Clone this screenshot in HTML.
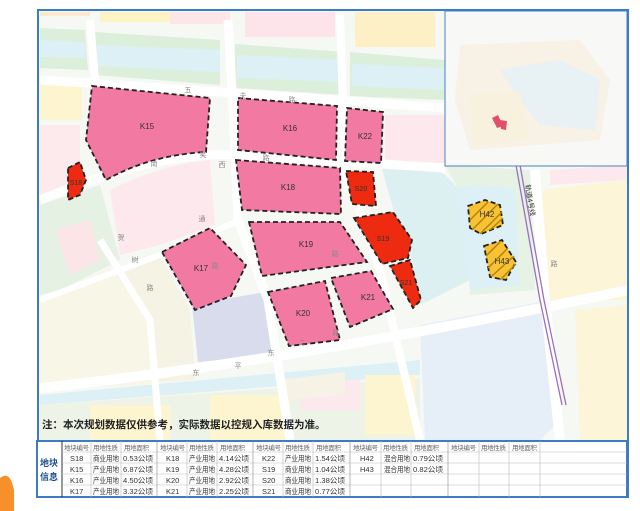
<!DOCTYPE html>
<html><head><meta charset="utf-8"><style>
html,body{margin:0;padding:0;background:#fff;width:640px;height:511px;overflow:hidden;font-family:"Liberation Sans","Noto Sans CJK SC",sans-serif}
svg{position:absolute;left:0;top:0}
</style></head><body>
<svg width="640" height="511" viewBox="0 0 640 511" font-family="Liberation Sans, Noto Sans CJK SC, sans-serif">
<rect width="640" height="511" fill="#fff"/>
<path d="M0,478 Q10,470 14,490 L14,511 L0,511Z" fill="#f7902a"/>
<rect x="38" y="10" width="590" height="430" fill="#f6f8f3"/>
<g>
<rect x="40" y="12" width="50" height="4" fill="#fde9cf"/>
<rect x="100" y="12" width="80" height="10" fill="#fdf3c4"/>
<rect x="170" y="12" width="60" height="12" fill="#fde6e8"/>
<rect x="245" y="12" width="90" height="25" fill="#fde4ea"/>
<rect x="355" y="12" width="80" height="35" fill="#fdf0c6"/>
<path d="M40,28 L85,30 L88,70 L40,68Z" fill="#dcefdb"/>
<path d="M40,40 L85,42 L85,58 L40,57Z" fill="#dcf0f5"/>
<path d="M95,32 L220,40 L220,85 L95,75Z" fill="#dcefdb"/>
<path d="M97,45 L220,50 L220,72 L97,66Z" fill="#dcf0f5"/>
<path d="M235,44 L345,52 L345,95 L235,88Z" fill="#dcefdb"/>
<path d="M237,55 L345,60 L345,82 L237,78Z" fill="#dcf0f5"/>
<path d="M350,52 L445,60 L445,100 L350,96Z" fill="#dcefdb"/>
<path d="M352,64 L445,68 L445,90 L352,86Z" fill="#dcf0f5"/>
<rect x="40" y="80" width="42" height="40" fill="#fdf5d0"/>
<rect x="40" y="125" width="40" height="70" fill="#fdeaec"/>
<path d="M385,115 L445,115 L445,165 L385,165Z" fill="#fde8ee"/>
<path d="M110,190 Q160,165 210,160 L215,225 L160,245 L120,255Z" fill="#fde9ed"/>
<path d="M40,205 L100,185 L120,260 L60,290 L40,295Z" fill="#e5f1e2"/>
<path d="M55,230 L90,220 L100,260 L70,275Z" fill="#fbe5e6"/>
<path d="M40,300 L110,268 L150,320 L155,385 L40,388Z" fill="#f8f6e6"/>
<path d="M112,270 L160,255 L190,310 L195,380 L158,382 L150,320Z" fill="#f5f3e3"/>
<path d="M192,305 L265,292 L272,355 L198,362Z" fill="#d9dced"/>
<path d="M380,160 Q420,160 445,175 L470,200 L470,280 L430,300 L418,305 L410,250 L395,215 L385,180Z" fill="#dcf0f1"/>
<path d="M445,165 L530,170 L535,290 L470,295 L470,210Z" fill="#e6f2e3"/>
<path d="M455,190 Q470,180 515,190 L520,285 L470,290Z" fill="#dcf0f5"/>
<path d="M540,190 L628,180 L628,300 L550,300Z" fill="#fdf5d8"/>
<path d="M550,170 L628,165 L628,180 L550,185Z" fill="#fde8ee"/>
<path d="M575,310 L628,305 L628,440 L580,440Z" fill="#fdf5d8"/>
<path d="M420,325 L550,300 L560,420 L540,440 L425,440Z" fill="#e6eef8"/>
<path d="M40,395 L420,360 L420,375 L40,405Z" fill="#dcf0f5"/>
<path d="M40,405 L420,378 L420,440 L40,440Z" fill="#edf4e7"/>
<rect x="90" y="405" width="80" height="35" fill="#fdf5d0"/>
<rect x="210" y="395" width="80" height="45" fill="#fdf5d0"/>
<rect x="300" y="380" width="60" height="30" fill="#fde8ee"/>
<rect x="365" y="375" width="50" height="60" fill="#fdf5d0"/>
<path d="M280,380 L345,372 L345,395 L285,400Z" fill="#f6f3e6"/>
<g stroke="#ffffff" fill="none">
<path d="M40,80 Q200,90 445,108" stroke-width="9"/>
<path d="M40,200 Q160,150 240,155 L445,168" stroke-width="9"/>
<path d="M40,388 Q300,360 628,290" stroke-width="10"/>
<path d="M228,20 L232,90 L238,220 L268,300 L290,440" stroke-width="9"/>
<path d="M340,15 L345,170 L380,270 L420,440" stroke-width="8"/>
<path d="M90,20 L95,80" stroke-width="8"/>
<path d="M535,170 L545,300 L560,440" stroke-width="10"/>
<path d="M100,240 L150,320 L160,440" stroke-width="7"/>
<path d="M40,300 L160,255 L240,220" stroke-width="6"/>
</g>
<path d="M516,165 L540,300 L562,405" stroke="#9a6fc0" stroke-width="1.3" fill="none"/>
<path d="M520,165 L544,300 L566,405" stroke="#9a6fc0" stroke-width="1.3" fill="none"/>
</g>
<g stroke="#222" stroke-width="1.8" stroke-dasharray="5,3" fill="#f27aa2">
<path d="M92,86 L210,98 L206,152 Q150,155 106,180 L86,140Z"/>
<path d="M238,98 L337,106 L336,160 L238,150Z"/>
<path d="M347,108 L383,112 L381,163 L345,161Z"/>
<path d="M236,160 L340,168 L341,214 L242,210Z"/>
<path d="M249,222 L340,222 L367,262 L262,276Z"/>
<path d="M162,252 L210,228 L246,265 L231,296 L195,310Z"/>
<path d="M268,292 L325,281 L340,340 L289,346Z"/>
<path d="M331,278 L371,271 L393,309 L350,327Z"/>
</g>
<g stroke="#222" stroke-width="1.8" stroke-dasharray="5,3" fill="#ee2b10">
<path d="M68,168 L80,162 L86,180 L80,195 L68,200Z"/>
<path d="M346,171 L373,172 L376,206 L352,204Z"/>
<path d="M354,218 L393,212 L412,240 L408,258 L382,264Z"/>
<path d="M390,266 L410,260 L421,300 L413,308Z"/>
</g>
<g stroke="#222" stroke-width="1.8" stroke-dasharray="5,3" fill="#f9c234">
<path d="M468,206 L485,200 L500,205 L503,225 L481,234 L470,228Z"/>
<path d="M484,246 L502,240 L516,262 L506,280 L490,277Z"/>
</g>
<g stroke="#b0840c" stroke-width="1.5">
<path d="M470,220 L488,202 M472,230 L498,204 M480,234 L502,212 M490,230 L503,218"/>
<path d="M486,256 L500,242 M488,268 L508,248 M492,276 L514,256 M500,280 L516,264"/>
</g>
<g font-size="8" fill="#333" text-anchor="middle">
<text x="147" y="129">K15</text><text x="290" y="131">K16</text><text x="365" y="139">K22</text>
<text x="288" y="190">K18</text><text x="306" y="247">K19</text><text x="201" y="271">K17</text>
<text x="303" y="316">K20</text><text x="368" y="300">K21</text>
<text x="76" y="185" font-size="7">S18</text><text x="361" y="191" font-size="7">S20</text>
<text x="383" y="241" font-size="7">S19</text><text x="406" y="285" font-size="7">S21</text>
<text x="487" y="217">H42</text><text x="502" y="264">H43</text>
</g>
<g font-size="7" fill="#888" text-anchor="middle">
<text x="188" y="92">五</text><text x="243" y="98">夫</text><text x="292" y="102">路</text>
<text x="154" y="166">南</text><text x="203" y="157">笑</text><text x="222" y="167">西</text><text x="266" y="160">路</text>
<text x="202" y="221">通</text><text x="121" y="240">贺</text><text x="135" y="262">树</text><text x="150" y="290">路</text>
<text x="215" y="268">路</text><text x="335" y="256">路</text><text x="336" y="335">路</text><text x="302" y="345">二</text>
<text x="271" y="355">东</text><text x="238" y="368">平</text><text x="196" y="375">东</text><text x="554" y="266">路</text>
</g>
<g font-size="7" fill="#333"><text x="525" y="185" transform="rotate(80 525 185)">轨道4号线</text></g>
<rect x="445" y="11" width="182" height="155" fill="#f8f8f7" stroke="#4d7fbf" stroke-width="1"/>
<path d="M460,45 L580,40 L610,80 L600,140 L470,150 L455,100Z" fill="#f7f1e6"/>
<path d="M500,70 L560,60 L600,80 L595,130 L540,125 L520,100Z" fill="#e8f1f3"/>
<path d="M470,95 L520,90 L530,140 L475,145Z" fill="#f8f1d8" opacity=".7"/>
<path d="M492,118 L498,115 L503,126 L497,128Z" fill="#e0506a"/>
<path d="M500,120 L507,121 L506,130 L501,129Z" fill="#e0506a"/>
<rect x="38" y="10" width="590" height="487" fill="none" stroke="#3b7cc2" stroke-width="2"/>
<text x="42" y="428" font-size="10.5" fill="#222" font-weight="bold">注：本次规划数据仅供参考，实际数据以控规入库数据为准。</text>
<rect x="37" y="441" width="590" height="56" fill="#fff"/>
<line x1="37" y1="441" x2="627" y2="441" stroke="#8a5a4a" stroke-width="1"/>
<rect x="37" y="441" width="590" height="56" fill="none" stroke="#3b7cc2" stroke-width="2"/>
<g stroke="#bbb" stroke-width="0.6">
<line x1="62" y1="441" x2="62" y2="497" stroke="#333" stroke-width="1"/>
<line x1="62" y1="452" x2="627" y2="452"/><line x1="62" y1="463" x2="627" y2="463"/><line x1="62" y1="474" x2="627" y2="474"/><line x1="62" y1="485" x2="627" y2="485"/>
<line x1="91" y1="441" x2="91" y2="497"/><line x1="121" y1="441" x2="121" y2="497"/><line x1="157" y1="441" x2="157" y2="497" stroke="#888"/>
<line x1="187" y1="441" x2="187" y2="497"/><line x1="217" y1="441" x2="217" y2="497"/><line x1="253" y1="441" x2="253" y2="497" stroke="#888"/>
<line x1="283" y1="441" x2="283" y2="497"/><line x1="313" y1="441" x2="313" y2="497"/><line x1="350" y1="441" x2="350" y2="497" stroke="#888"/>
<line x1="381" y1="441" x2="381" y2="497"/><line x1="411" y1="441" x2="411" y2="497"/><line x1="448" y1="441" x2="448" y2="497" stroke="#888"/>
<line x1="479" y1="441" x2="479" y2="497"/><line x1="509" y1="441" x2="509" y2="497"/><line x1="540" y1="441" x2="540" y2="497"/>
</g>
<g font-size="9" font-weight="bold" fill="#1d4f8c"><text x="40" y="466">地块</text><text x="40" y="480">信息</text></g>
<g font-size="6.5" fill="#666" lengthAdjust="spacingAndGlyphs">
<text x="64" y="450" textLength="25">地块编号</text><text x="93" y="450" textLength="25">用地性质</text><text x="124" y="450" textLength="25">用地面积</text>
<text x="160" y="450" textLength="25">地块编号</text><text x="189" y="450" textLength="25">用地性质</text><text x="220" y="450" textLength="25">用地面积</text>
<text x="256" y="450" textLength="25">地块编号</text><text x="285" y="450" textLength="25">用地性质</text><text x="316" y="450" textLength="25">用地面积</text>
<text x="353" y="450" textLength="25">地块编号</text><text x="383" y="450" textLength="25">用地性质</text><text x="414" y="450" textLength="25">用地面积</text>
<text x="451" y="450" textLength="25">地块编号</text><text x="481" y="450" textLength="25">用地性质</text><text x="512" y="450" textLength="25">用地面积</text>
</g>
<g font-size="7.5" fill="#333">
<text x="70" y="461">S18</text><text x="93" y="461" textLength="26" lengthAdjust="spacingAndGlyphs">商业用地</text><text x="123" y="461" textLength="30" lengthAdjust="spacingAndGlyphs">0.53公顷</text>
<text x="70" y="472">K15</text><text x="93" y="472" textLength="26" lengthAdjust="spacingAndGlyphs">产业用地</text><text x="123" y="472" textLength="30" lengthAdjust="spacingAndGlyphs">6.87公顷</text>
<text x="70" y="483">K16</text><text x="93" y="483" textLength="26" lengthAdjust="spacingAndGlyphs">产业用地</text><text x="123" y="483" textLength="30" lengthAdjust="spacingAndGlyphs">4.50公顷</text>
<text x="70" y="494">K17</text><text x="93" y="494" textLength="26" lengthAdjust="spacingAndGlyphs">产业用地</text><text x="123" y="494" textLength="30" lengthAdjust="spacingAndGlyphs">3.32公顷</text>
<text x="166" y="461">K18</text><text x="189" y="461" textLength="26" lengthAdjust="spacingAndGlyphs">产业用地</text><text x="219" y="461" textLength="30" lengthAdjust="spacingAndGlyphs">4.14公顷</text>
<text x="166" y="472">K19</text><text x="189" y="472" textLength="26" lengthAdjust="spacingAndGlyphs">产业用地</text><text x="219" y="472" textLength="30" lengthAdjust="spacingAndGlyphs">4.28公顷</text>
<text x="166" y="483">K20</text><text x="189" y="483" textLength="26" lengthAdjust="spacingAndGlyphs">产业用地</text><text x="219" y="483" textLength="30" lengthAdjust="spacingAndGlyphs">2.92公顷</text>
<text x="166" y="494">K21</text><text x="189" y="494" textLength="26" lengthAdjust="spacingAndGlyphs">产业用地</text><text x="219" y="494" textLength="30" lengthAdjust="spacingAndGlyphs">2.25公顷</text>
<text x="262" y="461">K22</text><text x="285" y="461" textLength="26" lengthAdjust="spacingAndGlyphs">产业用地</text><text x="315" y="461" textLength="30" lengthAdjust="spacingAndGlyphs">1.54公顷</text>
<text x="262" y="472">S19</text><text x="285" y="472" textLength="26" lengthAdjust="spacingAndGlyphs">商业用地</text><text x="315" y="472" textLength="30" lengthAdjust="spacingAndGlyphs">1.04公顷</text>
<text x="262" y="483">S20</text><text x="285" y="483" textLength="26" lengthAdjust="spacingAndGlyphs">商业用地</text><text x="315" y="483" textLength="30" lengthAdjust="spacingAndGlyphs">1.38公顷</text>
<text x="262" y="494">S21</text><text x="285" y="494" textLength="26" lengthAdjust="spacingAndGlyphs">商业用地</text><text x="315" y="494" textLength="30" lengthAdjust="spacingAndGlyphs">0.77公顷</text>
<text x="360" y="461">H42</text><text x="384" y="461" textLength="26" lengthAdjust="spacingAndGlyphs">混合用地</text><text x="413" y="461" textLength="30" lengthAdjust="spacingAndGlyphs">0.79公顷</text>
<text x="360" y="472">H43</text><text x="384" y="472" textLength="26" lengthAdjust="spacingAndGlyphs">混合用地</text><text x="413" y="472" textLength="30" lengthAdjust="spacingAndGlyphs">0.82公顷</text>
</g>
</svg>
</body></html>
